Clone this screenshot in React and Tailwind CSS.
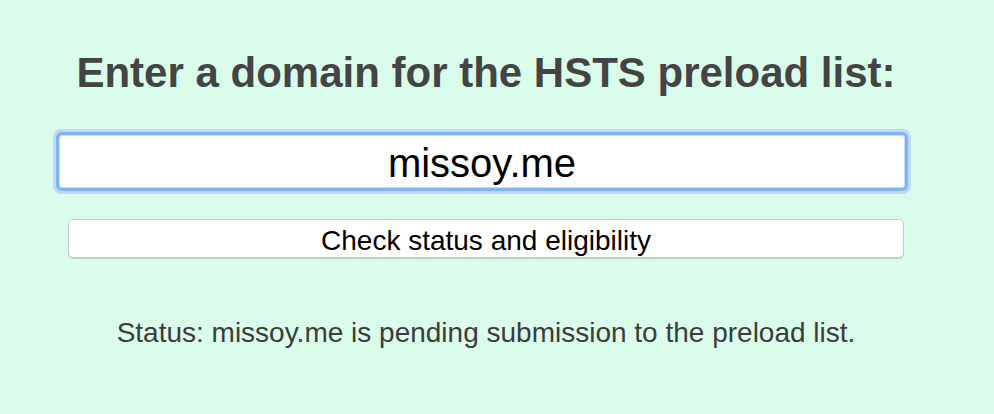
import React, { useState } from 'react';

const FONT = "font-['Liberation_Sans','Helvetica_Neue',Arial,sans-serif]";

const App = () => {
    const [domain, setDomain] = useState('missoy.me');

    return (
        <div className={`min-h-[414px] w-full bg-[#dafcea] ${FONT}`}>
            <div className="w-[972px] pt-[49px]">
                <h1 className="text-center text-[42px] leading-[48px] font-bold text-[#444444]">
                    Enter a domain for the HSTS preload list:
                </h1>
                <div className="pl-[59px] mt-[38px]">
                    <input
                        type="text"
                        value={domain}
                        onChange={(e) => setDomain(e.target.value)}
                        className="block w-[846px] h-[53px] pt-[3px] bg-white border border-[#c6dcf9] rounded-[3px] text-center text-[40px] text-black outline-none shadow-[0_0_0_3px_#80b3f3,0_0_0_6px_#bcd8fa]"
                    />
                </div>
                <div className="pl-[68px] mt-[31px]">
                    <button className="block w-[836px] h-[39px] pt-[5px] bg-white border border-[#c9c9c9] rounded-[5px] text-center text-[28px] leading-[32px] text-black shadow-[0_1px_1px_rgba(0,0,0,0.18)]">
                        Check status and eligibility
                    </button>
                </div>
                <p className="mt-[59px] text-center text-[28px] leading-[32px] text-[#3c3c3c]">
                    Status: missoy.me is pending submission to the preload list.
                </p>
            </div>
        </div>
    );
};

export default App;
